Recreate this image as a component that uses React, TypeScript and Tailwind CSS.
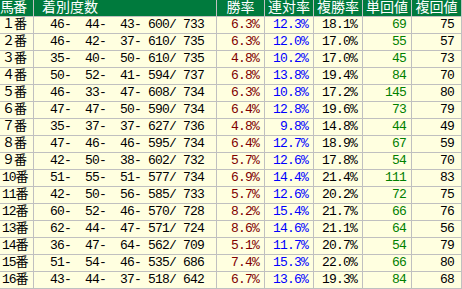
import React from 'react';

type Row = {
  no: string;
  record: string;
  win: string;
  ren: string;
  fuku: string;
  tan: string;
  fukuVal: string;
};

const rows: Row[] = [
  { no: '１番', record: '46-  44-  43- 600/ 733', win: '6.3%', ren: '12.3%', fuku: '18.1%', tan: '69', fukuVal: '75' },
  { no: '２番', record: '46-  42-  37- 610/ 735', win: '6.3%', ren: '12.0%', fuku: '17.0%', tan: '55', fukuVal: '57' },
  { no: '３番', record: '35-  40-  50- 610/ 735', win: '4.8%', ren: '10.2%', fuku: '17.0%', tan: '45', fukuVal: '73' },
  { no: '４番', record: '50-  52-  41- 594/ 737', win: '6.8%', ren: '13.8%', fuku: '19.4%', tan: '84', fukuVal: '70' },
  { no: '５番', record: '46-  33-  47- 608/ 734', win: '6.3%', ren: '10.8%', fuku: '17.2%', tan: '145', fukuVal: '80' },
  { no: '６番', record: '47-  47-  50- 590/ 734', win: '6.4%', ren: '12.8%', fuku: '19.6%', tan: '73', fukuVal: '79' },
  { no: '７番', record: '35-  37-  37- 627/ 736', win: '4.8%', ren: '9.8%', fuku: '14.8%', tan: '44', fukuVal: '49' },
  { no: '８番', record: '47-  46-  46- 595/ 734', win: '6.4%', ren: '12.7%', fuku: '18.9%', tan: '67', fukuVal: '59' },
  { no: '９番', record: '42-  50-  38- 602/ 732', win: '5.7%', ren: '12.6%', fuku: '17.8%', tan: '54', fukuVal: '70' },
  { no: '10番', record: '51-  55-  51- 577/ 734', win: '6.9%', ren: '14.4%', fuku: '21.4%', tan: '111', fukuVal: '83' },
  { no: '11番', record: '42-  50-  56- 585/ 733', win: '5.7%', ren: '12.6%', fuku: '20.2%', tan: '72', fukuVal: '75' },
  { no: '12番', record: '60-  52-  46- 570/ 728', win: '8.2%', ren: '15.4%', fuku: '21.7%', tan: '66', fukuVal: '76' },
  { no: '13番', record: '62-  44-  47- 571/ 724', win: '8.6%', ren: '14.6%', fuku: '21.1%', tan: '64', fukuVal: '56' },
  { no: '14番', record: '36-  47-  64- 562/ 709', win: '5.1%', ren: '11.7%', fuku: '20.7%', tan: '54', fukuVal: '79' },
  { no: '15番', record: '51-  54-  46- 535/ 686', win: '7.4%', ren: '15.3%', fuku: '22.0%', tan: '66', fukuVal: '80' },
  { no: '16番', record: '43-  44-  37- 518/ 642', win: '6.7%', ren: '13.6%', fuku: '19.3%', tan: '84', fukuVal: '68' },
];

const cell = 'h-[16px] leading-[16px] whitespace-nowrap overflow-hidden border-r border-[#c0c0c0] box-content';

const App: React.FC = () => {
  return (
    <div className="w-[462px] h-[289px] bg-white font-['Liberation_Mono','Noto_Sans_CJK_JP',monospace] text-[13px]">
      {/* header */}
      <div className="flex bg-[#007a3d] text-white text-[14px] border-b border-[#c0c0c0]">
        <div className={`${cell} w-[33px] tracking-[-1px]`}>馬番</div>
        <div className={`${cell} w-[174px] pl-[8px]`}>着別度数</div>
        <div className={`${cell} w-[47px] text-center`}>勝率</div>
        <div className={`${cell} w-[48px] text-center`}>連対率</div>
        <div className={`${cell} w-[48px] text-center`}>複勝率</div>
        <div className={`${cell} w-[48px] text-center`}>単回値</div>
        <div className={`${cell} w-[49px] text-center`}>複回値</div>
      </div>
      {rows.map((r) => (
        <div key={r.no} className="flex bg-[#ffffe0] text-black border-b border-[#c0c0c0]">
          <div className={`${cell} w-[31px] pl-[2px] tracking-[-1px]`}>{r.no}</div>
          <div className={`${cell} w-[170px] pr-[12px] text-right whitespace-pre tracking-[-0.8px]`}>{r.record}</div>
          <div className={`${cell} w-[42px] pr-[5px] text-right text-[#800000] tracking-[-0.8px]`}>{r.win}</div>
          <div className={`${cell} w-[43px] pr-[5px] text-right text-[#0000ff] tracking-[-0.8px]`}>{r.ren}</div>
          <div className={`${cell} w-[43px] pr-[5px] text-right tracking-[-0.8px]`}>{r.fuku}</div>
          <div className={`${cell} w-[43px] pr-[5px] text-right text-[#008000] tracking-[-0.8px]`}>{r.tan}</div>
          <div className={`${cell} w-[42px] pr-[7px] text-right tracking-[-0.8px]`}>{r.fukuVal}</div>
        </div>
      ))}
    </div>
  );
};

export default App;
